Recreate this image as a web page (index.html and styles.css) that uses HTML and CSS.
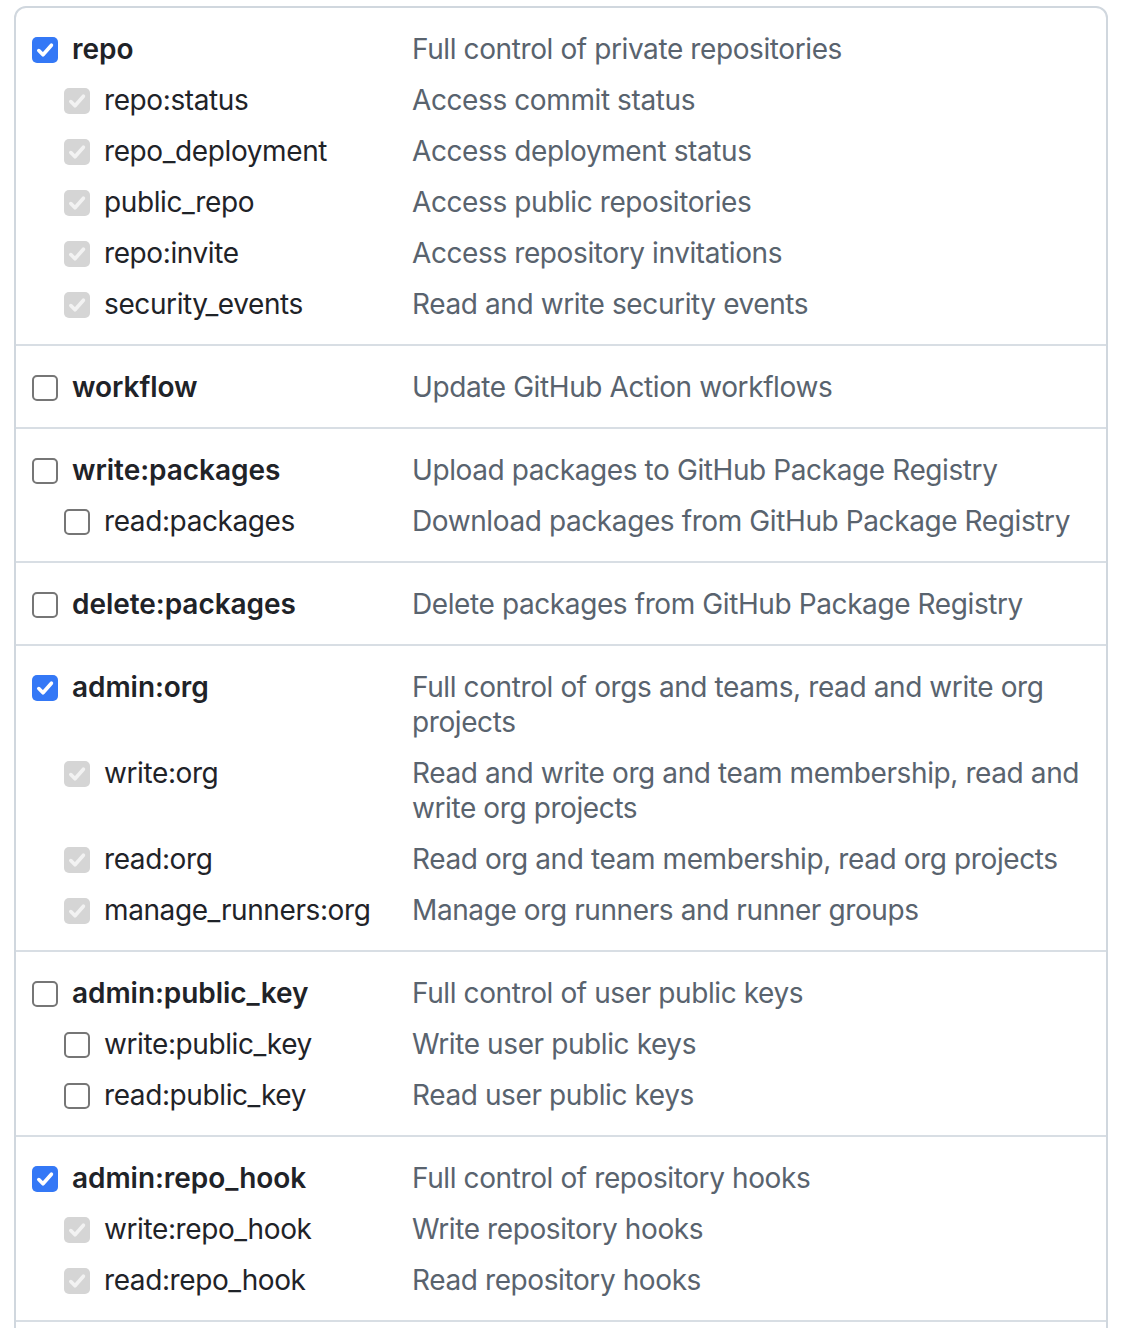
FILE: index.html
```html
<!DOCTYPE html>
<html lang="en">
<head>
<meta charset="utf-8">
<title>Scopes</title>
<link rel="stylesheet" href="styles.css">
</head>
<body>
<div class="scopes">
  <div class="group">
    <div class="row"><label class="name top"><span class="cb on"><svg viewBox="0 0 26 26"><path d="M6.8 13.6 L11 17.8 L19.4 8.2"/></svg></span>repo</label><span class="desc">Full control of private repositories</span></div>
    <div class="row"><label class="name sub"><span class="cb dis"><svg viewBox="0 0 26 26"><path d="M6.8 13.6 L11 17.8 L19.4 8.2"/></svg></span>repo:status</label><span class="desc">Access commit status</span></div>
    <div class="row"><label class="name sub"><span class="cb dis"><svg viewBox="0 0 26 26"><path d="M6.8 13.6 L11 17.8 L19.4 8.2"/></svg></span>repo_deployment</label><span class="desc">Access deployment status</span></div>
    <div class="row"><label class="name sub"><span class="cb dis"><svg viewBox="0 0 26 26"><path d="M6.8 13.6 L11 17.8 L19.4 8.2"/></svg></span>public_repo</label><span class="desc">Access public repositories</span></div>
    <div class="row"><label class="name sub"><span class="cb dis"><svg viewBox="0 0 26 26"><path d="M6.8 13.6 L11 17.8 L19.4 8.2"/></svg></span>repo:invite</label><span class="desc">Access repository invitations</span></div>
    <div class="row"><label class="name sub"><span class="cb dis"><svg viewBox="0 0 26 26"><path d="M6.8 13.6 L11 17.8 L19.4 8.2"/></svg></span>security_events</label><span class="desc">Read and write security events</span></div>
  </div>
  <div class="group">
    <div class="row"><label class="name top"><span class="cb off"></span>workflow</label><span class="desc">Update GitHub Action workflows</span></div>
  </div>
  <div class="group">
    <div class="row"><label class="name top"><span class="cb off"></span>write:packages</label><span class="desc">Upload packages to GitHub Package Registry</span></div>
    <div class="row"><label class="name sub"><span class="cb off"></span>read:packages</label><span class="desc">Download packages from GitHub Package Registry</span></div>
  </div>
  <div class="group">
    <div class="row"><label class="name top"><span class="cb off"></span>delete:packages</label><span class="desc">Delete packages from GitHub Package Registry</span></div>
  </div>
  <div class="group">
    <div class="row"><label class="name top"><span class="cb on"><svg viewBox="0 0 26 26"><path d="M6.8 13.6 L11 17.8 L19.4 8.2"/></svg></span>admin:org</label><span class="desc">Full control of orgs and teams, read and write org projects</span></div>
    <div class="row"><label class="name sub"><span class="cb dis"><svg viewBox="0 0 26 26"><path d="M6.8 13.6 L11 17.8 L19.4 8.2"/></svg></span>write:org</label><span class="desc">Read and write org and team membership, read and write org projects</span></div>
    <div class="row"><label class="name sub"><span class="cb dis"><svg viewBox="0 0 26 26"><path d="M6.8 13.6 L11 17.8 L19.4 8.2"/></svg></span>read:org</label><span class="desc">Read org and team membership, read org projects</span></div>
    <div class="row"><label class="name sub"><span class="cb dis"><svg viewBox="0 0 26 26"><path d="M6.8 13.6 L11 17.8 L19.4 8.2"/></svg></span>manage_runners:org</label><span class="desc">Manage org runners and runner groups</span></div>
  </div>
  <div class="group">
    <div class="row"><label class="name top"><span class="cb off"></span>admin:public_key</label><span class="desc">Full control of user public keys</span></div>
    <div class="row"><label class="name sub"><span class="cb off"></span>write:public_key</label><span class="desc">Write user public keys</span></div>
    <div class="row"><label class="name sub"><span class="cb off"></span>read:public_key</label><span class="desc">Read user public keys</span></div>
  </div>
  <div class="group">
    <div class="row"><label class="name top"><span class="cb on"><svg viewBox="0 0 26 26"><path d="M6.8 13.6 L11 17.8 L19.4 8.2"/></svg></span>admin:repo_hook</label><span class="desc">Full control of repository hooks</span></div>
    <div class="row"><label class="name sub"><span class="cb dis"><svg viewBox="0 0 26 26"><path d="M6.8 13.6 L11 17.8 L19.4 8.2"/></svg></span>write:repo_hook</label><span class="desc">Write repository hooks</span></div>
    <div class="row"><label class="name sub"><span class="cb dis"><svg viewBox="0 0 26 26"><path d="M6.8 13.6 L11 17.8 L19.4 8.2"/></svg></span>read:repo_hook</label><span class="desc">Read repository hooks</span></div>
  </div>
</div>
</body>
</html>
```
FILE: styles.css
```css
html, body {
  margin: 0;
  padding: 0;
  background: #ffffff;
}

body {
  font-family: Inter, "Noto Sans", "Liberation Sans", sans-serif;
  font-size: 28px;
  line-height: 35px;
  letter-spacing: -0.4px;
  color: #1f2328;
}

.scopes {
  margin: 6px 26px 0 14px;
  padding-bottom: 40px;
  border: 2px solid #d0d7de;
  border-radius: 12px;
}

.group {
  padding: 15px 16px;
  border-bottom: 2px solid #d8dee4;
}

.row {
  display: grid;
  grid-template-columns: 380px 1fr;
  align-items: start;
  padding: 9px 0 7px;
}

.name {
  display: flex;
  align-items: center;
  gap: 14px;
  white-space: nowrap;
  height: 35px;
}

.name.top {
  font-weight: 600;
  letter-spacing: -0.05px;
}

.name.sub {
  padding-left: 32px;
  font-weight: 400;
}

.desc {
  color: #59636e;
}

.cb {
  flex: none;
  width: 26px;
  height: 26px;
  box-sizing: border-box;
  border-radius: 5px;
  display: inline-flex;
  align-items: center;
  justify-content: center;
}

.cb svg {
  width: 26px;
  height: 26px;
  display: block;
}

.cb path {
  fill: none;
  stroke-width: 3.6;
  stroke-linecap: round;
  stroke-linejoin: round;
}

.cb.on {
  background: #3478f6;
}

.cb.on path {
  stroke: #ffffff;
}

.cb.dis {
  background: #d5d5d5;
}

.cb.dis path {
  stroke: #f2f2f2;
}

.cb.off {
  background: #ffffff;
  border: 2px solid #767676;
}
```
